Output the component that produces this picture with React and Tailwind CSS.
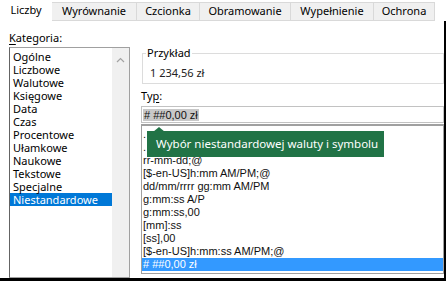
import React from 'react';

const tabs = [
  { label: 'Liczby', w: 'w-[52px]', active: true },
  { label: 'Wyrównanie', w: 'w-[85px]' },
  { label: 'Czcionka', w: 'w-[63px]' },
  { label: 'Obramowanie', w: 'w-[91px]' },
  { label: 'Wypełnienie', w: 'w-[83px]' },
  { label: 'Ochrona', w: 'w-[61px]' },
];

const categories = [
  'Ogólne', 'Liczbowe', 'Walutowe', 'Księgowe', 'Data', 'Czas', 'Procentowe',
  'Ułamkowe', 'Naukowe', 'Tekstowe', 'Specjalne', 'Niestandardowe',
];

// first two rows sit under the tooltip
const formats = [
  '.',
  '.',
  'rr-mm-dd;@',
  '[$-en-US]h:mm AM/PM;@',
  'dd/mm/rrrr gg:mm AM/PM',
  'g:mm:ss A/P',
  'g:mm:ss,00',
  '[mm]:ss',
  '[ss],00',
  '[$-en-US]h:mm:ss AM/PM;@',
  '# ##0,00 zł',
];

function App() {
  return (
    <div className="w-[446px] h-[281px] bg-white flex flex-col overflow-hidden font-['Noto_Sans',sans-serif] text-[11px] text-black">
      {/* tabs */}
      <div className="h-[21px] flex items-end shrink-0">
        {tabs.map((t) =>
          t.active ? (
            <div key={t.label} className={`${t.w} h-[21px] flex items-center justify-center bg-white pb-[1px]`}>
              {t.label}
            </div>
          ) : (
            <div
              key={t.label}
              className={`${t.w} h-[19px] flex items-center justify-center bg-[#f0f0f0] border border-l-0 border-[#d9d9d9] first:border-l`}
            >
              {t.label}
            </div>
          )
        )}
      </div>

      <div className="flex-1 flex border-r-2 border-b-[3px] border-black min-h-0">
        {/* categories */}
        <div className="w-[130px] pl-[9px] flex flex-col shrink-0">
          <div className="mt-[10px] h-[14px] leading-[14px]">
            <span className="underline underline-offset-2">K</span>ategoria:
          </div>
          <div className="mt-[2px] flex-1 flex border border-l-[#646464] border-t-[#a0a0a0] border-r-[#a0a0a0] border-b-[#a0a0a0] min-h-0">
            <div className="flex-1 pt-[2px]">
              {categories.map((c) => (
                <div
                  key={c}
                  className={`h-[13px] leading-[13px] pl-[3px] ${c === 'Niestandardowe' ? 'bg-[#0078d7] text-white' : ''}`}
                >
                  {c}
                </div>
              ))}
            </div>
            <div className="w-[17px] bg-[#f0f0f0] flex flex-col items-center">
              <svg width="9" height="6" viewBox="0 0 9 6" className="mt-[9px]">
                <path d="M1 5 L4.5 1.5 L8 5" fill="none" stroke="#a3a3a3" strokeWidth="1.2" />
              </svg>
            </div>
          </div>
        </div>

        {/* right side */}
        <div className="flex-1 ml-[11px] flex flex-col relative">
          <div className="mt-[32px] ml-[1px] h-[31px] border border-[#dcdcdc] relative">
            <span className="absolute left-[3px] -top-[8px] bg-white px-[1px] leading-[14px]">Przykład</span>
            <div className="pt-[12px] pl-[7px] leading-[14px] text-[#222]">1 234,56 zł</div>
          </div>
          <div className="mt-[5px] h-[14px] leading-[14px]">
            Ty<span className="underline underline-offset-2">p</span>:
          </div>
          <div className="mt-[3px] h-[17px] border border-[#c2c2c2] flex items-center pl-[1px] font-['Liberation_Sans',sans-serif]">
            <span className="bg-[#c8c8c8] h-[12px] leading-[12px] px-[1px] text-[#111]">
              # ##0,00 zł
            </span>
          </div>
          <div className="mt-[1px] h-[150px] border border-[#a0a0a0] border-t-2 pt-[2px] font-['Liberation_Sans',sans-serif] text-[#111]">
            {formats.map((f, i) => (
              <div
                key={i}
                className={`h-[13px] leading-[13px] pl-[1px] whitespace-nowrap ${i === formats.length - 1 ? 'bg-[#3399ff] text-white' : ''}`}
              >
                {f}
              </div>
            ))}
          </div>

          {/* tooltip */}
          <div className="absolute left-[6px] top-[110px] w-[237px] h-[26px] bg-[#217346] text-white text-[11.5px] flex items-center pl-[9px] whitespace-nowrap">
            Wybór niestandardowej waluty i symbolu
            <svg width="12" height="5" viewBox="0 0 12 5" className="absolute left-[6px] -top-[4px]">
              <path d="M0 5 L6 0 L12 5 Z" fill="#217346" />
            </svg>
          </div>
        </div>
      </div>
    </div>
  );
}

export default App;
